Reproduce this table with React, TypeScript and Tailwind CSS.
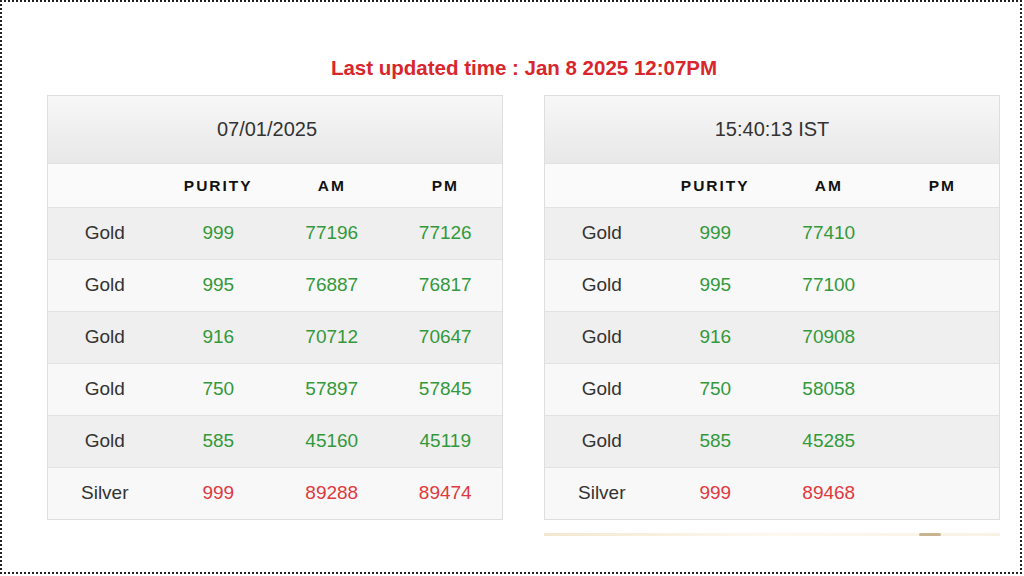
import React from "react";

type Row = { name: string; purity: string; am: string; pm: string; silver?: boolean };

const left: Row[] = [
  { name: "Gold", purity: "999", am: "77196", pm: "77126" },
  { name: "Gold", purity: "995", am: "76887", pm: "76817" },
  { name: "Gold", purity: "916", am: "70712", pm: "70647" },
  { name: "Gold", purity: "750", am: "57897", pm: "57845" },
  { name: "Gold", purity: "585", am: "45160", pm: "45119" },
  { name: "Silver", purity: "999", am: "89288", pm: "89474", silver: true },
];

const right: Row[] = [
  { name: "Gold", purity: "999", am: "77410", pm: "" },
  { name: "Gold", purity: "995", am: "77100", pm: "" },
  { name: "Gold", purity: "916", am: "70908", pm: "" },
  { name: "Gold", purity: "750", am: "58058", pm: "" },
  { name: "Gold", purity: "585", am: "45285", pm: "" },
  { name: "Silver", purity: "999", am: "89468", pm: "", silver: true },
];

function RateTable({ title, rows, shift }: { title: string; rows: Row[]; shift?: boolean }) {
  return (
    <div className="w-[456px] border border-[#dedede] flex flex-col">
      <div
        className={
          "h-[68px] pb-[2px] flex items-center justify-center bg-gradient-to-b from-[#f7f7f7] to-[#e8e8e8] border-b border-[#e2e2e2] text-[20px] text-[#333] " +
          (shift ? "pr-[16px]" : "")
        }
      >
        {title}
      </div>
      <div className="h-[43px] grid grid-cols-4 items-center bg-[#fafafa] text-[15.5px] font-bold tracking-[2px] text-[#111]">
        <div></div>
        <div className="text-center">PURITY</div>
        <div className="text-center">AM</div>
        <div className="text-center">PM</div>
      </div>
      {rows.map((r, i) => (
        <div
          key={i}
          className={
            "h-[52px] pb-[1px] grid grid-cols-4 items-center border-t border-[#e2e2e2] text-[19px] " +
            (i % 2 === 0 ? "bg-[#efefef]" : "bg-[#f8f8f8]")
          }
        >
          <div className="text-center text-[#333]">{r.name}</div>
          <div className={"text-center " + (r.silver ? "text-[#e0393e]" : "text-[#33993b]")}>{r.purity}</div>
          <div className={"text-center " + (r.silver ? "text-[#e0393e]" : "text-[#33993b]")}>{r.am}</div>
          <div className={"text-center " + (r.silver ? "text-[#e0393e]" : "text-[#33993b]")}>{r.pm}</div>
        </div>
      ))}
    </div>
  );
}

export default function App() {
  return (
    <div
      className="w-[1024px] h-[576px] bg-white overflow-hidden"
      style={{ fontFamily: '"Liberation Sans", Arial, sans-serif' }}
    >
      <div className="w-[1022px] h-[574px] border-2 border-dotted border-[#222] flex flex-col">
        <div className="pl-[45px] w-[999px] flex flex-col">
          <div className="pt-[53px] h-[93px] text-center text-[20.5px] font-bold text-[#d9262c] leading-[26px]">
            Last updated time : Jan 8 2025 12:07PM
          </div>
          <div className="flex gap-[41px] items-start">
            <RateTable title="07/01/2025" rows={left} shift />
            <div className="flex flex-col">
              <RateTable title="15:40:13 IST" rows={right} />
              <div className="mt-[13px] h-[3px] w-[456px] bg-gradient-to-r from-[#f3e8cf] via-[#fdf9f0] to-[#f8f2e4] relative">
                <div className="absolute left-[375px] top-0 w-[22px] h-[3px] bg-[#c8b48e] rounded-full"></div>
              </div>
            </div>
          </div>
        </div>
      </div>
    </div>
  );
}
